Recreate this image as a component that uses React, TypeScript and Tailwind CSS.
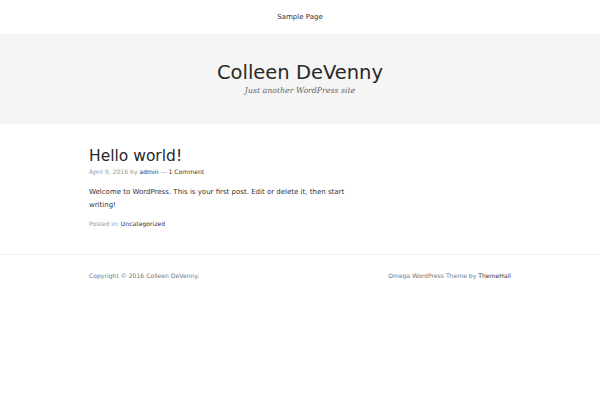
export default function App() {
  return (
    <div className="min-h-[400px] bg-white text-[#333] font-['DejaVu_Sans',sans-serif]">
      <nav className="h-[34px] flex items-center justify-center">
        <a className="text-[7px] text-[#333]">Sample Page</a>
      </nav>
      <header className="bg-[#f5f5f5] h-[90px] flex flex-col items-center pt-[27px]">
        <h1 className="text-[19.5px] leading-[24px] text-[#282828]">Colleen DeVenny</h1>
        <p className="text-[7.8px] leading-[12px] italic text-[#666] font-['DejaVu_Serif',serif]">Just another WordPress site</p>
      </header>
      <main className="w-[422px] mx-auto pt-[22px] pb-[25px]">
        <article className="w-[270px]">
          <h2 className="text-[15.5px] leading-[20px] text-[#282828]">Hello world!</h2>
          <div className="text-[6.1px] leading-[10px] text-[#999] mt-[1px]">
            April 9, 2016 by <span className="text-[#333]">admin</span> — <span className="text-[#333]">1 Comment</span>
          </div>
          <p className="text-[7px] leading-[13px] text-[#333] mt-[9px]">
            Welcome to WordPress. This is your first post. Edit or delete it, then start writing!
          </p>
          <div className="text-[6.1px] leading-[10px] text-[#999] mt-[7px]">
            Posted in: <span className="text-[#333]">Uncategorized</span>
          </div>
        </article>
      </main>
      <footer className="border-t border-[#f0f0f0]">
        <div className="w-[422px] mx-auto flex justify-between pt-[16px] text-[6.1px] text-[#777]">
          <span>Copyright © 2016 Colleen DeVenny.</span>
          <span>Omega WordPress Theme by <span className="text-[#333]">ThemeHall</span></span>
        </div>
      </footer>
    </div>
  )
}
